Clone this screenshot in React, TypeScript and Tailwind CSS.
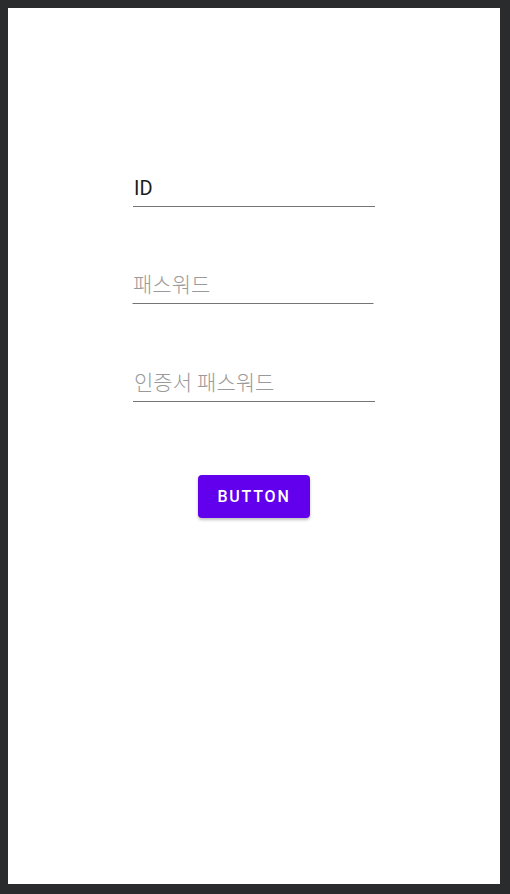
import React from "react";

function Field({ label, hint, className = "" }: { label: string; hint?: boolean; className?: string }) {
  return (
    <div className={`border-b border-[#757575] pb-1 ${className}`}>
      <div
        className={`h-[28px] leading-[28px] pl-[1px] whitespace-nowrap ${hint ? "text-[21px] font-light text-[#9a9a9a]" : "text-[20px] text-[#1c1c1c]"}`}
        style={{ fontFamily: 'Roboto, "Noto Sans CJK KR", sans-serif' }}
      >
        {label}
      </div>
    </div>
  );
}

export default function App() {
  return (
    <div className="h-[894px] w-[510px] bg-[#2a2b2d] pl-2 pt-2 pr-[10px] pb-[10px]">
      <div className="flex h-full w-full flex-col items-center bg-white pt-[166px]">
        <Field label="ID" className="w-[242px]" />
        <Field label="패스워드" hint className="mt-[64px] w-[241px] -translate-x-[1.5px]" />
        <Field label="인증서 패스워드" hint className="mt-[65px] w-[242px]" />
        <button
          className="mt-[73px] h-[43px] w-[112px] rounded-[4px] bg-[#6200ee] text-[16px] font-medium tracking-[1.8px] text-white shadow-[0_2px_3px_rgba(0,0,0,0.25)]"
          style={{ fontFamily: 'Roboto, sans-serif' }}
        >
          BUTTON
        </button>
      </div>
    </div>
  );
}
